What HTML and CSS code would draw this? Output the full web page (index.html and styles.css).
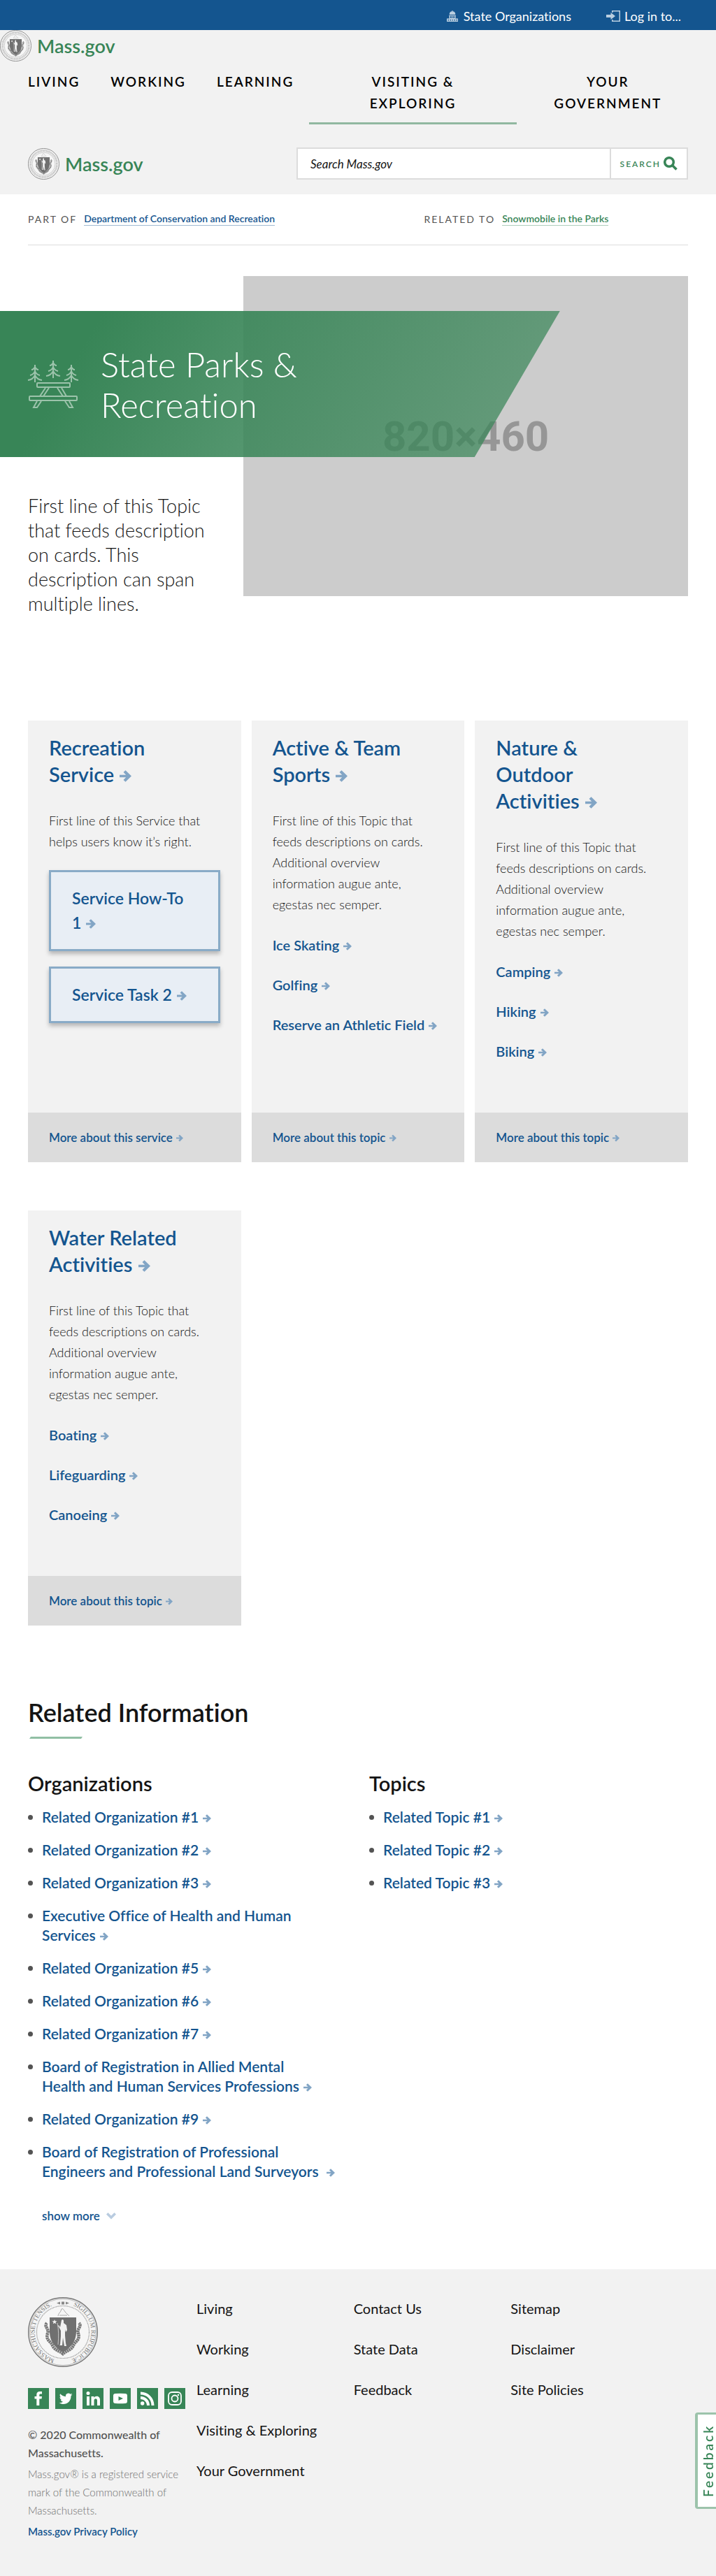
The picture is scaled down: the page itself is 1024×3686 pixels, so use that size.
FILE: index.html
```html
<!DOCTYPE html>
<html lang="en">
<head>
<meta charset="utf-8">
<meta name="viewport" content="width=device-width, initial-scale=1">
<title>State Parks &amp; Recreation | Mass.gov</title>
<link rel="stylesheet" href="styles.css">
</head>
<body>
<svg class="sprite" aria-hidden="true">
  <symbol id="arrow" viewBox="0 0 16 16"><path d="M0 6.3h8.6L5.2 2.9 8 .2 16 8l-8 7.8-2.8-2.7 3.4-3.4H0z"/></symbol>
  <symbol id="chevron" viewBox="0 0 14 10"><path d="M0 2.6 2.5 0 7 4.4 11.5 0 14 2.6 7 9.6z"/></symbol>
  <symbol id="shield" viewBox="0 0 100 100">
    <path fill="#707070" d="M31 29h38v21c0 13-8 23-19 29-11-6-19-16-19-29z"/>
    <path fill="none" stroke="#777" stroke-width="4.5" stroke-dasharray="2.5 .6" d="M27 37c-5 5 4 8 1 15-3 10 5 11 7 17 3 7 9 7 15 12 6-5 12-5 15-12 2-6 10-7 7-17-3-7 6-10 1-15"/>
    <path fill="none" stroke="#aaa" stroke-width="1" d="M43 27c0-4 4-5 5-10 3-2 3 3 8 7l3 3M45 26h11"/>
    <path fill="#f2f2f2" d="M38 32l1 2.300h2.500l-2 1.600.8 2.400-2.300-1.400-2.200 1.400.7-2.400-2-1.600h2.500zM48 33c1-2 3-1 3 1v3l4 3 1 7-2 3-1-4v9l1 11 1 4h-3l-2-12-1 11h-4l1-1 1-12v-8l-2-4-2-3 1-1 2 3z"/>
    <path fill="none" stroke="#ddd" stroke-width=".8" d="M42 37c2 9 2 20 1 31"/>
  </symbol>
  <symbol id="seal" viewBox="0 0 100 100">
    <circle cx="50" cy="50" r="49" fill="#f4f4f4" stroke="#888" stroke-width="2"/>
    <circle cx="50" cy="50" r="42" fill="none" stroke="#aaa" stroke-width="6" stroke-dasharray="1.800 2.300"/>
    <circle cx="50" cy="50" r="36.500" fill="#f6f6f6" stroke="#bbb" stroke-width="1.500"/>
    <use href="#shield"/>
  </symbol>
</svg>

<header class="header">
  <div class="topbar">
    <a href="#"><svg class="icon-state" viewBox="0 0 16 16" aria-hidden="true"><path d="M7.500 0h1v1.300A4.300 4.300 0 0 1 12.300 5v1H3.700V5a4.300 4.300 0 0 1 3.800-3.700zM3 7h10v1H3zM3.500 8h1.500v3h1.500V8h1v3h1V8h1v3H11V8h1.500v3.500H16V16H0v-4.500h3.500zM1.500 13v1.500H3V13zm3 0v1.500H6V13zm3 0v1.500h1.300V13zm3 0v1.500H12V13zm3 0v1.500H15V13z" fill-rule="evenodd"/></svg>State Organizations</a>
    <button type="button"><svg class="icon-login" viewBox="0 0 20 16" aria-hidden="true"><path d="M8 3V0h12v16H8v-3h1.500v1.500h9v-13h-9V3zM0 6h6.500V3L13 8l-6.500 5v-3H0z"/></svg>Log in to...</button>
  </div>
  <a class="logo" href="#"><svg class="logo-seal" aria-hidden="true"><use href="#seal"/></svg>Mass.gov</a>
  <nav class="main-nav" aria-label="Main">
    <a href="#">Living</a>
    <a href="#">Working</a>
    <a href="#">Learning</a>
    <a class="is-wide is-active" href="#">Visiting &amp; Exploring</a>
    <a class="is-wide" href="#">Your Government</a>
  </nav>
  <div class="search-row">
    <a class="logo" href="#"><svg class="logo-seal" aria-hidden="true"><use href="#seal"/></svg>Mass.gov</a>
    <form class="search" role="search">
      <input type="search" placeholder="Search Mass.gov" aria-label="Search Mass.gov">
      <button type="button">Search<svg viewBox="0 0 20 20" aria-hidden="true"><circle cx="8" cy="8" r="6.300"/><path d="M12.500 12.500l6 6"/></svg></button>
    </form>
  </div>
</header>

<main>
  <div class="relations">
    <div><span>Part of</span><a href="#">Department of Conservation and Recreation</a></div>
    <div class="is-green"><span>Related to</span><a href="#">Snowmobile in the Parks</a></div>
  </div>

  <section class="hero">
    <div class="hero-image" role="img" aria-label="Placeholder, 820 by 460">820×460</div>
    <div class="hero-banner">
      <svg viewBox="0 0 75 68" aria-hidden="true">
        <path d="M11 6v25M11 9q-2 4-5 4M11 9q2 4 5 4M11 15q-2 5-7 6M11 15q2 5 7 6M11 21q-3 6-10 7M11 21q3 6 10 7"/>
        <path d="M37 0v25M37 3q-2 4-5 4M37 3q2 4 5 4M37 9q-2 5-7 6M37 9q2 5 7 6M37 15q-3 6-10 7M37 15q3 6 10 7"/>
        <path d="M63 6v25M63 9q-2 4-5 4M63 9q2 4 5 4M63 15q-2 5-7 6M63 15q2 5 7 6M63 21q-3 6-10 7M63 21q3 6 10 7"/>
        <rect x="14" y="32" width="47" height="6" rx="1"/>
        <rect x="3" y="51" width="68" height="6" rx="1"/>
        <path d="M26 39l-8 12h5l8-12M49 39l7 12h-5l-8-12M14 58l-5 9h5l6-9M60 58l5 9h-5l-6-9"/>
      </svg>
      <h1>State Parks &amp; Recreation</h1>
    </div>
    <p class="hero-text">First line of this Topic that feeds description on cards. This description can span multiple lines.</p>
  </section>

  <section class="cards">
    <article class="card">
      <h2><a href="#">Recreation <span>Service <svg><use href="#arrow"/></svg></span></a></h2>
      <p>First line of this Service that helps users know it’s right.</p>
      <div class="callouts">
        <a href="#">Service How-To <span>1 <svg><use href="#arrow"/></svg></span></a>
        <a href="#">Service Task <span>2 <svg><use href="#arrow"/></svg></span></a>
      </div>
      <a class="more" href="#">More about this <span>service <svg><use href="#arrow"/></svg></span></a>
    </article>
    <article class="card">
      <h2><a href="#">Active &amp; Team <span>Sports <svg><use href="#arrow"/></svg></span></a></h2>
      <p>First line of this Topic that feeds descriptions on cards. Additional overview information augue ante, egestas nec semper.</p>
      <ul>
        <li><a href="#">Ice <span>Skating <svg><use href="#arrow"/></svg></span></a></li>
        <li><a href="#"><span>Golfing <svg><use href="#arrow"/></svg></span></a></li>
        <li><a href="#">Reserve an Athletic <span>Field <svg><use href="#arrow"/></svg></span></a></li>
      </ul>
      <a class="more" href="#">More about this <span>topic <svg><use href="#arrow"/></svg></span></a>
    </article>
    <article class="card">
      <h2><a href="#">Nature &amp; Outdoor <span>Activities <svg><use href="#arrow"/></svg></span></a></h2>
      <p>First line of this Topic that feeds descriptions on cards. Additional overview information augue ante, egestas nec semper.</p>
      <ul>
        <li><a href="#"><span>Camping <svg><use href="#arrow"/></svg></span></a></li>
        <li><a href="#"><span>Hiking <svg><use href="#arrow"/></svg></span></a></li>
        <li><a href="#"><span>Biking <svg><use href="#arrow"/></svg></span></a></li>
      </ul>
      <a class="more" href="#">More about this <span>topic <svg><use href="#arrow"/></svg></span></a>
    </article>
    <article class="card">
      <h2><a href="#">Water Related <span>Activities <svg><use href="#arrow"/></svg></span></a></h2>
      <p>First line of this Topic that feeds descriptions on cards. Additional overview information augue ante, egestas nec semper.</p>
      <ul>
        <li><a href="#"><span>Boating <svg><use href="#arrow"/></svg></span></a></li>
        <li><a href="#"><span>Lifeguarding <svg><use href="#arrow"/></svg></span></a></li>
        <li><a href="#"><span>Canoeing <svg><use href="#arrow"/></svg></span></a></li>
      </ul>
      <a class="more" href="#">More about this <span>topic <svg><use href="#arrow"/></svg></span></a>
    </article>
  </section>

  <section class="related">
    <h2>Related Information</h2>
    <div class="related-columns">
      <div>
        <h3>Organizations</h3>
        <ul>
          <li><a href="#">Related Organization <span>#1 <svg><use href="#arrow"/></svg></span></a></li>
          <li><a href="#">Related Organization <span>#2 <svg><use href="#arrow"/></svg></span></a></li>
          <li><a href="#">Related Organization <span>#3 <svg><use href="#arrow"/></svg></span></a></li>
          <li><a href="#">Executive Office of Health and Human <span>Services <svg><use href="#arrow"/></svg></span></a></li>
          <li><a href="#">Related Organization <span>#5 <svg><use href="#arrow"/></svg></span></a></li>
          <li><a href="#">Related Organization <span>#6 <svg><use href="#arrow"/></svg></span></a></li>
          <li><a href="#">Related Organization <span>#7 <svg><use href="#arrow"/></svg></span></a></li>
          <li><a href="#">Board of Registration in Allied Mental<br>Health and Human Services <span>Professions <svg><use href="#arrow"/></svg></span></a></li>
          <li><a href="#">Related Organization <span>#9 <svg><use href="#arrow"/></svg></span></a></li>
          <li><a href="#">Board of Registration of Professional<br>Engineers and Professional Land <span>Surveyors&nbsp; <svg><use href="#arrow"/></svg></span></a></li>
        </ul>
        <button class="show-more" type="button">show more<svg aria-hidden="true"><use href="#chevron"/></svg></button>
      </div>
      <div>
        <h3>Topics</h3>
        <ul>
          <li><a href="#">Related Topic <span>#1 <svg><use href="#arrow"/></svg></span></a></li>
          <li><a href="#">Related Topic <span>#2 <svg><use href="#arrow"/></svg></span></a></li>
          <li><a href="#">Related Topic <span>#3 <svg><use href="#arrow"/></svg></span></a></li>
        </ul>
      </div>
    </div>
  </section>
</main>

<footer class="footer">
  <div class="footer-about">
    <a class="footer-seal" href="#" aria-label="Mass.gov home">
      <svg viewBox="0 0 100 100" aria-hidden="true">
        <circle cx="50" cy="50" r="49.300" fill="#f4f4f4" stroke="#777" stroke-width="1.400"/>
        <circle cx="50" cy="50" r="47.500" fill="none" stroke="#999" stroke-width=".6"/>
        <circle cx="50" cy="50" r="37.500" fill="#f6f6f6" stroke="#888" stroke-width="1.200" stroke-dasharray="1 1"/>
        <defs><path id="ring" d="M50 90.500a40.500 40.500 0 0 1 0-81 40.500 40.500 0 0 1 0 81"/></defs>
        <text class="seal-text"><textPath href="#ring" startOffset="12">MASSACHUSETTENSIS.</textPath></text>
        <text class="seal-text"><textPath href="#ring" startOffset="142">SIGILLUM REIPUBLICÆ</textPath></text>
        <path d="M41 8.500l5-2v4zM59 8.500l-5-2v4zM48 6.500h4v4h-4z" fill="#888"/>
        <use href="#shield"/>
      </svg>
    </a>
    <div class="social">
      <a href="#" aria-label="Facebook"><svg viewBox="0 0 30 30"><path d="M12.300 25v-9.500H9.500v-3.600h2.800V9.500C12.300 6.500 14 5 16.700 5H20v3.600h-2c-1.300 0-1.700.6-1.700 1.700v1.600H20l-.5 3.600h-3.200V25z"/></svg></a>
      <a href="#" aria-label="Twitter"><svg viewBox="0 0 30 30"><path d="M24.500 9.200c-.7.300-1.400.5-2.100.6.800-.5 1.400-1.200 1.600-2-.7.400-1.500.7-2.400.9a3.900 3.900 0 0 0-6.600 3.500c-3.200-.2-6-1.700-7.900-4-1 1.800-.5 4 1.200 5.200-.6 0-1.200-.2-1.800-.5 0 1.900 1.300 3.500 3.100 3.900-.6.100-1.200.2-1.800.1.500 1.500 2 2.600 3.600 2.700A7.900 7.900 0 0 1 5.500 21.200c8 4.800 17-.5 17-9.500v-.5c.8-.6 1.500-1.200 2-2z"/></svg></a>
      <a href="#" aria-label="LinkedIn"><svg viewBox="0 0 30 30"><circle cx="8" cy="7.500" r="2.500"/><path d="M6 12h4v13H6zM12.500 12h3.800v1.800c2-3.400 8.700-3 8.700 3V25h-4v-7.200c0-3.700-4.500-3.400-4.500 0V25h-4z"/></svg></a>
      <a href="#" aria-label="YouTube"><svg viewBox="0 0 30 30"><path fill-rule="evenodd" d="M8 8q7-.7 14 0 3 .2 3 3v8q0 2.800-3 3-7 .7-14 0-3-.2-3-3v-8q0-2.800 3-3zm4.500 4v6l6.500-3z"/></svg></a>
      <a href="#" aria-label="RSS"><svg viewBox="0 0 30 30"><circle cx="7.700" cy="22" r="2.700"/><path d="M5 5.500C16 5.500 24.500 14 24.500 25h-4C20.500 16 14 9.500 5 9.500zM5 12c7.500 0 13 5.500 13 13h-4c0-5-4-9-9-9z"/></svg></a>
      <a href="#" aria-label="Instagram"><svg viewBox="0 0 30 30"><g fill="none" stroke="#fff" stroke-width="1.800"><rect x="6" y="6" width="18" height="18" rx="5"/><circle cx="15" cy="15" r="4.500"/></g><circle cx="20" cy="10" r="1.200"/></svg></a>
    </div>
    <p class="copyright">© 2020 Commonwealth of Massachusetts.</p>
    <p>Mass.gov® is a registered service mark of the Commonwealth of Massachusetts.</p>
    <a class="privacy" href="#">Mass.gov Privacy Policy</a>
  </div>
  <nav class="footer-nav" aria-label="Sections">
    <a href="#">Living</a>
    <a href="#">Working</a>
    <a href="#">Learning</a>
    <a href="#">Visiting &amp; Exploring</a>
    <a href="#">Your Government</a>
  </nav>
  <nav class="footer-nav" aria-label="Help">
    <a href="#">Contact Us</a>
    <a href="#">State Data</a>
    <a href="#">Feedback</a>
  </nav>
  <nav class="footer-nav" aria-label="Site">
    <a href="#">Sitemap</a>
    <a href="#">Disclaimer</a>
    <a href="#">Site Policies</a>
  </nav>
</footer>
<button class="feedback" type="button">Feedback</button>
</body>
</html>
```

FILE: styles.css
```css
* { box-sizing: border-box; }

body {
  margin: 0;
  background: #fff;
  color: #141414;
  font-family: Lato, "Open Sans", sans-serif;
  font-size: 18px;
  font-variant-ligatures: none;
}

h1, h2, h3, p, ul { margin: 0; padding: 0; }
ul { list-style: none; }
a { color: #14558f; text-decoration: none; }
button { border: 0; background: none; padding: 0; font: inherit; cursor: pointer; }
.sprite { position: absolute; width: 0; height: 0; }

/* Header */
.header { background: #f2f2f2; padding-bottom: 21px; }
.topbar {
  display: flex;
  justify-content: flex-end;
  align-items: center;
  gap: 50px;
  height: 43px;
  padding: 3px 50px 0 40px;
  background: #14558f;
}
.topbar a, .topbar button { display: flex; align-items: center; color: #fff; font-size: 18px; }
.topbar svg { height: 16px; fill: #b9cee0; }
.icon-state { width: 16px; margin-right: 8px; }
.icon-login { width: 20px; margin-right: 6px; }

.logo { display: flex; align-items: center; gap: 8px; color: #388557; font-size: 27px; font-weight: 600; line-height: 45px; }
.logo-seal { width: 45px; height: 45px; }

.main-nav { display: grid; grid-template-columns: auto auto auto 297fr 262fr; padding: 0 24px 0 18px; }
.main-nav a {
  padding: 13px 22px 12px;
  border-bottom: 3px solid transparent;
  color: #000;
  font-size: 19px;
  font-weight: 600;
  letter-spacing: 2px;
  line-height: 31px;
  text-transform: uppercase;
}
.main-nav .is-wide { padding-left: 48px; padding-right: 48px; text-align: center; }
.main-nav .is-active { border-bottom-color: #91b8a0; }

.search-row { display: flex; justify-content: space-between; align-items: center; padding: 33px 40px 0; }
.search { display: flex; width: 560px; height: 46px; border: 2px solid #dcdcdc; background: #fff; }
.search input {
  flex: 1;
  min-width: 0;
  border: 0;
  border-right: 2px solid #dcdcdc;
  padding: 0 18px;
  background: #fff;
  font: italic 17px Lato, sans-serif;
}
.search input::placeholder { color: #141414; opacity: 1; }
.search button {
  display: flex;
  align-items: center;
  gap: 4px;
  padding: 0 13px;
  color: #388557;
  font-size: 12px;
  font-weight: 600;
  letter-spacing: 2px;
  text-transform: uppercase;
}
.search svg { width: 20px; height: 20px; fill: none; stroke: #388557; stroke-width: 3.5; }

/* Parent and sibling pages */
.relations {
  display: grid;
  grid-template-columns: 3fr 2fr;
  align-items: center;
  height: 73px;
  margin: 0 40px;
  border-bottom: 1px solid #dcdcdc;
  font-size: 14px;
  line-height: 18px;
}
.relations div { display: flex; gap: 10px; }
.relations span { color: #535353; letter-spacing: 2px; text-transform: uppercase; }
.relations a { border-bottom: 1px solid #a1bbd2; font-weight: 600; line-height: 16px; }
.relations .is-green a { border-color: #afcebc; color: #388557; }

/* Hero */
.hero { display: grid; grid-template-columns: 34% 1fr 40px; grid-template-rows: 50px 209px auto; margin-top: 44px; }
.hero-image {
  grid-area: 1 / 2 / 4 / 3;
  display: flex;
  align-items: center;
  justify-content: center;
  margin-bottom: 28px;
  background: #ccc;
  color: #969696;
  font: bold 60px Roboto, sans-serif;
}
.hero-banner {
  grid-area: 2 / 1 / 3 / 4;
  display: flex;
  align-items: center;
  gap: 30px;
  width: 78.2%;
  padding-left: 39px;
  background: linear-gradient(120deg, rgb(56, 133, 87) 16%, rgba(56, 133, 87, .7) 90%);
  clip-path: polygon(0 0, 100% 0, calc(100% - 122px) 100%, 0 100%);
}
.hero-banner svg { width: 75px; height: 68px; fill: none; stroke: #9cc3ab; stroke-width: 2; }
.hero-banner h1 { width: 360px; color: #fff; font-size: 49px; font-weight: 300; line-height: 58px; }
.hero-text { grid-area: 3 / 1 / 4 / 2; padding: 52px 30px 0 40px; font-size: 27px; font-weight: 300; line-height: 35px; }

/* Cards */
.cards { display: grid; grid-template-columns: repeat(3, 1fr); gap: 69px 15px; margin: 150px 40px 0; }
.card { display: flex; flex-direction: column; padding-top: 20px; background: #f2f2f2; }
.card span { white-space: nowrap; }
.card svg, .related li svg { width: 12px; height: 12px; margin-left: 1px; fill: #82a5c5; }
.card h2 { padding: 0 48px 0 30px; font-size: 29px; font-weight: 600; line-height: 38px; }
.card h2 svg { width: 17px; height: 17px; }
.card p { margin-top: 32px; padding: 0 30px; font-weight: 300; line-height: 30px; }
.card ul { display: grid; gap: 30px; margin-top: 30px; padding: 0 10px 74px 30px; font-size: 20px; font-weight: 600; line-height: 27px; }
.callouts { display: grid; gap: 22px; margin-top: 26px; padding: 0 30px; }
.callouts a {
  padding: 20px 24px 20px 30px;
  border: 3px solid #89abc7;
  background: #e8eef5;
  box-shadow: 0 4px 6px rgba(0, 0, 0, .25);
  font-size: 23px;
  font-weight: 600;
  line-height: 35px;
}
.callouts svg { width: 14px; height: 14px; }
.more { margin-top: auto; padding: 20px 30px; background: #dcdcdc; font-size: 17px; font-weight: 600; line-height: 31px; }
.card .more svg { width: 10px; height: 11px; }

/* Related information */
.related { padding: 104px 40px 64px; }
.related h2 { font-size: 36px; font-weight: 600; line-height: 40px; }
.related h2::after {
  content: "";
  display: block;
  width: 76px;
  height: 3px;
  margin: 15px 0 0 2px;
  background: #91bfa4;
  clip-path: polygon(2px 0, 100% 0, calc(100% - 2px) 100%, 0 100%);
}
.related-columns { display: grid; grid-template-columns: 1fr 1fr; gap: 32px; margin-top: 48px; }
.related h3 { font-size: 29px; font-weight: 600; line-height: 32px; }
.related ul { display: grid; gap: 19px; margin-top: 18px; }
.related li { display: flex; gap: 13px; font-size: 21px; font-weight: 600; line-height: 28px; }
.related li::before { content: ""; flex: none; width: 7px; height: 7px; margin-top: 11px; border-radius: 50%; background: #535353; }
.related span { white-space: nowrap; }
.show-more { display: flex; align-items: center; gap: 9px; margin: 38px 0 0 20px; color: #14558f; font-size: 17px; font-weight: 600; line-height: 24px; }
.show-more svg { width: 14px; height: 10px; fill: #b9cce0; }

/* Footer */
.footer { display: grid; grid-template-columns: 241px 1fr 1fr 1fr; padding: 40px 69px 51px 40px; background: #f2f2f2; }
.footer-seal, .footer-seal svg { display: block; width: 100px; height: 100px; }
.seal-text { fill: #777; font: 9px "Liberation Serif", serif; }
.footer-about { padding-right: 10px; font-size: 15px; line-height: 26px; }
.footer-about p { margin-top: 4px; color: #707070; font-weight: 300; }
.footer-about .copyright { margin-top: 24px; color: #535353; font-size: 16px; font-weight: 500; }
.privacy { display: block; margin-top: 4px; font-weight: 600; }
.social { display: flex; gap: 9px; margin-top: 30px; }
.social svg { display: block; width: 30px; height: 30px; background: #388557; fill: #fff; }
.footer-nav { display: flex; flex-direction: column; align-items: flex-start; gap: 30px; padding-top: 2px; font-size: 20px; line-height: 28px; }
.footer-nav a { color: #141414; }

.feedback {
  position: fixed;
  right: 0;
  bottom: 96px;
  width: 30px;
  height: 138px;
  padding-right: 5px;
  border: 3px solid #9cc3ab;
  border-left-width: 0;
  border-right-width: 4px;
  border-radius: 0 4px 4px 0;
  background: #fff;
  color: #388557;
  font-size: 19px;
  font-weight: 600;
  letter-spacing: 3px;
  line-height: 20px;
  writing-mode: vertical-rl;
  transform: rotate(180deg);
}
```
